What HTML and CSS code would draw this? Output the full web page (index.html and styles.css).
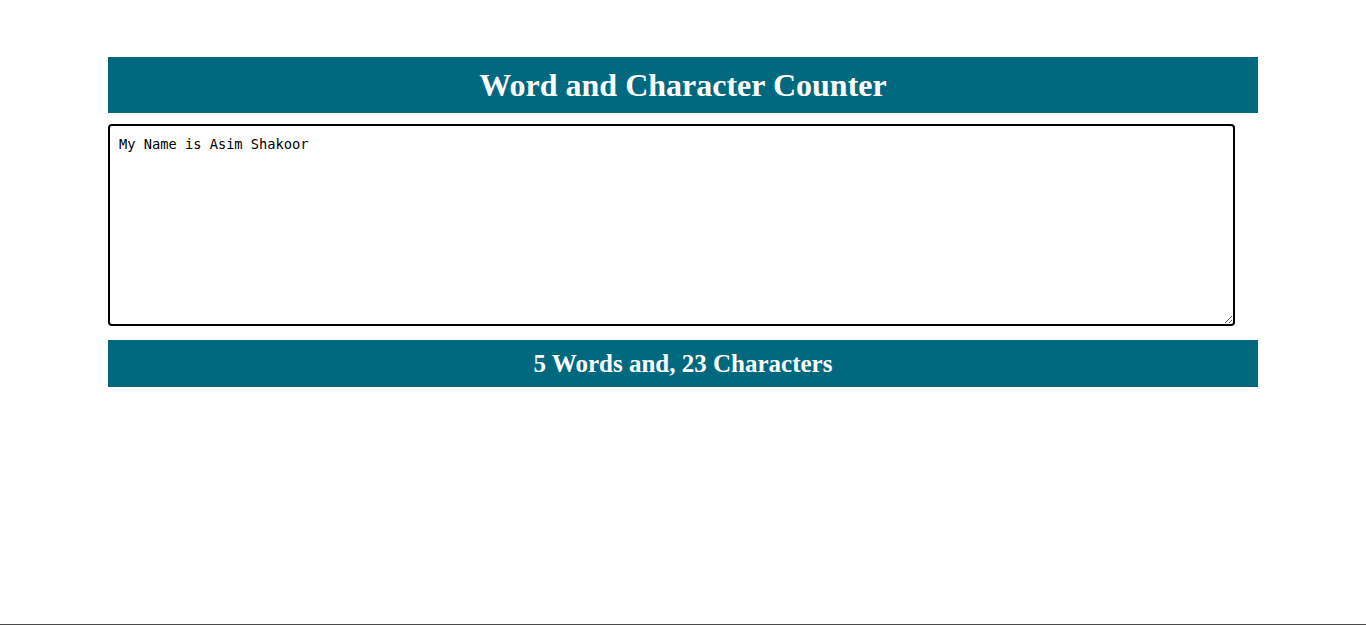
FILE: index.html
```html
<!DOCTYPE html>
<html lang="en">
<head>
<meta charset="utf-8">
<title>Word and Character Counter</title>
<link rel="stylesheet" href="styles.css">
</head>
<body>
<main class="container">
  <h1 class="title">Word and Character Counter</h1>
  <textarea class="input">My Name is Asim Shakoor</textarea>
  <h2 class="result">5 Words and, 23 Characters</h2>
</main>
<div class="edge"></div>
</body>
</html>
```
FILE: styles.css
```css
html, body {
  margin: 0;
  padding: 0;
  background: #ffffff;
}
body {
  font-family: "Liberation Serif", "Times New Roman", serif;
}
.container {
  width: 1150px;
  margin: 57px auto 0;
  display: flex;
  flex-direction: column;
}
.title {
  margin: 0;
  background: #00697f;
  color: #ffffff;
  font-size: 32px;
  font-weight: bold;
  line-height: 36px;
  padding: 10px 0;
  text-align: center;
}
.input {
  display: block;
  box-sizing: border-box;
  width: 98%;
  height: 202px;
  margin: 11px 0 0;
  padding: 10px 9px;
  border: 2px solid #000000;
  border-radius: 4px;
  font-family: "DejaVu Sans Mono", "Liberation Mono", monospace;
  font-size: 13.7px;
  color: #000000;
  resize: both;
  outline: none;
}
.result {
  margin: 14px 0 0;
  background: #00697f;
  color: #ffffff;
  font-size: 25px;
  font-weight: bold;
  line-height: 28px;
  padding: 10px 0 9px;
  text-align: center;
}
.edge {
  position: fixed;
  left: 0;
  right: 0;
  bottom: 0;
  height: 1px;
  background: #4a4a4a;
}
```
